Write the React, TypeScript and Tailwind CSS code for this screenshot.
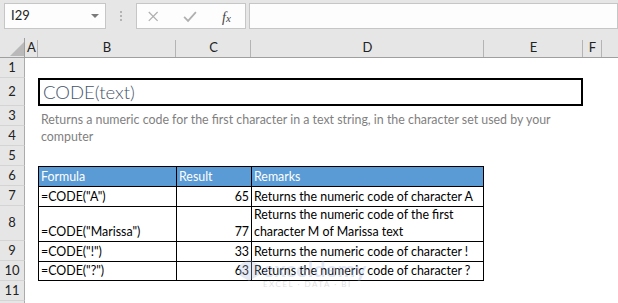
import React from "react";

const font = { fontFamily: "Lato, 'Liberation Sans', sans-serif" };

function RowHead({ n, row }: { n: string; row: string }) {
  return (
    <div
      className={`col-start-1 ${row} flex items-center justify-center border-r border-b border-r-[#ababab] border-b-[#d4d4d4] bg-[#e6e6e6] text-[13px] text-[#222]`}
    >
      {n}
    </div>
  );
}

function ColHead({ l, last }: { l: string; last?: boolean }) {
  return (
    <div className="row-start-1 flex items-center justify-center bg-[#e6e6e6] border-b border-[#9f9f9f] text-[13px] text-[#222] relative">
      {l}
      {!last && <span className="absolute right-0 top-[2px] bottom-0 w-px bg-[#b4b4b4]" />}
    </div>
  );
}

export default function App() {
  return (
    <div className="w-[618px] h-[303px] overflow-hidden bg-white relative" style={font}>
      {/* formula bar */}
      <div className="h-[38px] bg-[#e6e6e6] flex items-start pt-[3px] pl-[4px] gap-0">
        <div className="w-[102px] h-[26px] bg-[#fdfdfd] border border-[#c6c6c6] flex items-center pl-[6px] pr-[6px] text-[13px] text-[#222]">
          <span className="flex-1">I29</span>
          <span className="w-0 h-0 border-l-[4px] border-r-[4px] border-t-[4px] border-l-transparent border-r-transparent border-t-[#7a7a7a]" />
        </div>
        <div className="w-[30px] h-[26px] flex flex-col items-center justify-center gap-[2px]">
          <span className="w-[2px] h-[2px] bg-[#b3b3b3]" />
          <span className="w-[2px] h-[2px] bg-[#b3b3b3]" />
          <span className="w-[2px] h-[2px] bg-[#b3b3b3]" />
        </div>
        <div className="w-[110px] h-[26px] bg-[#fdfdfd] border border-[#c6c6c6] flex items-center">
          <svg width="110" height="24" viewBox="0 0 110 24">
            <path d="M12 8 L21 17 M21 8 L12 17" stroke="#b0b0b0" strokeWidth="1.3" fill="none" />
            <path d="M48 13 L52 17 L60 8" stroke="#b0b0b0" strokeWidth="1.8" fill="none" />
          </svg>
        </div>
        <div className="ml-[3px] flex-1 h-[26px] bg-[#fdfdfd] border border-[#c6c6c6]" />
      </div>
      <span
        className="absolute left-[222px] top-[7px] text-[14px] italic text-[#444]"
        style={{ fontFamily: "'Liberation Serif', serif" }}
      >
        f<span className="text-[11px]">x</span>
      </span>

      {/* sheet */}
      <div className="grid grid-cols-[25px_13px_138px_75px_233px_99px_19px_16px] grid-rows-[20px_20px_28px_20px_20px_20px_20px_20px_35px_20px_20px_20px_20px]">
        <div className="row-start-1 col-start-1 bg-[#e6e6e6] border-b border-r border-[#9f9f9f] relative">
          <svg className="absolute left-[10px] top-[4px]" width="14" height="14" viewBox="0 0 14 14">
            <path d="M14 0 L14 14 L0 14 Z" fill="#b9b9b9" />
          </svg>
        </div>
        <ColHead l="A" />
        <ColHead l="B" />
        <ColHead l="C" />
        <ColHead l="D" />
        <ColHead l="E" />
        <ColHead l="F" />
        <ColHead l="" last />

        <RowHead n="1" row="row-start-2" />
        <RowHead n="2" row="row-start-3" />
        <RowHead n="3" row="row-start-4" />
        <RowHead n="4" row="row-start-5" />
        <RowHead n="5" row="row-start-6" />
        <RowHead n="6" row="row-start-7" />
        <RowHead n="7" row="row-start-8" />
        <RowHead n="8" row="row-start-9" />
        <RowHead n="9" row="row-start-10" />
        <RowHead n="10" row="row-start-11" />
        <RowHead n="11" row="row-start-12" />
        <RowHead n="" row="row-start-13" />

        {/* title */}
        <div className="col-start-3 col-span-4 row-start-3 border-2 border-black flex items-center pl-[3px] text-[18.5px] leading-none text-[#44546a] font-light">
          CODE(text)
        </div>

        {/* description */}
        <div className="col-start-3 col-span-4 row-start-4 row-span-2 flex items-end pl-[3px] pb-[1px] text-[12.4px] leading-[17px] text-[#7f7f7f]">
          <span className="w-[530px]">
            Returns a numeric code for the first character in a text string, in the character set used by your computer
          </span>
        </div>

        {/* table */}
        <div className="col-start-3 col-span-3 row-start-7 row-span-5 grid grid-cols-[138px_75px_232px] grid-rows-[20px_20px_35px_20px_19px] border-r border-b border-black text-[12.4px] leading-[17px]">
          <Cell head>Formula</Cell>
          <Cell head>Result</Cell>
          <Cell head>Remarks</Cell>

          <Cell>=CODE("A")</Cell>
          <Cell right>65</Cell>
          <Cell>Returns the numeric code of character A</Cell>

          <Cell>=CODE("Marissa")</Cell>
          <Cell right>77</Cell>
          <Cell>
            <span>
              Returns the numeric code of the first
              <br />
              character M of Marissa text
            </span>
          </Cell>

          <Cell>=CODE("!")</Cell>
          <Cell right>33</Cell>
          <Cell>Returns the numeric code of character !</Cell>

          <Cell>=CODE("?")</Cell>
          <Cell right>63</Cell>
          <Cell>Returns the numeric code of character ?</Cell>
        </div>
      </div>

      {/* watermark */}
      <div className="absolute left-[238px] top-[258px] flex items-start gap-[3px] opacity-30 pointer-events-none">
        <svg width="22" height="24" viewBox="0 0 22 24">
          <path d="M11 1 L21 7 L21 17 L11 23 L1 17 L1 7 Z" fill="#a9b8d8" />
        </svg>
        <div className="flex flex-col leading-none">
          <span className="text-[21px] font-bold text-[#9fb2dc] tracking-[0.5px]">exceldemy</span>
          <span className="text-[8px] text-[#9a9a9a] tracking-[1.5px] mt-[1px]">EXCEL · DATA · BI</span>
        </div>
      </div>
    </div>
  );
}

function Cell({ children, head, right }: { children?: React.ReactNode; head?: boolean; right?: boolean }) {
  return (
    <div
      className={`border-t border-l border-black flex items-end pb-[1px] px-[2px] ${right ? "justify-end" : ""} ${
        head ? "bg-[#5b9bd5] text-white items-center pb-0" : "text-black"
      }`}
    >
      {children}
    </div>
  );
}
